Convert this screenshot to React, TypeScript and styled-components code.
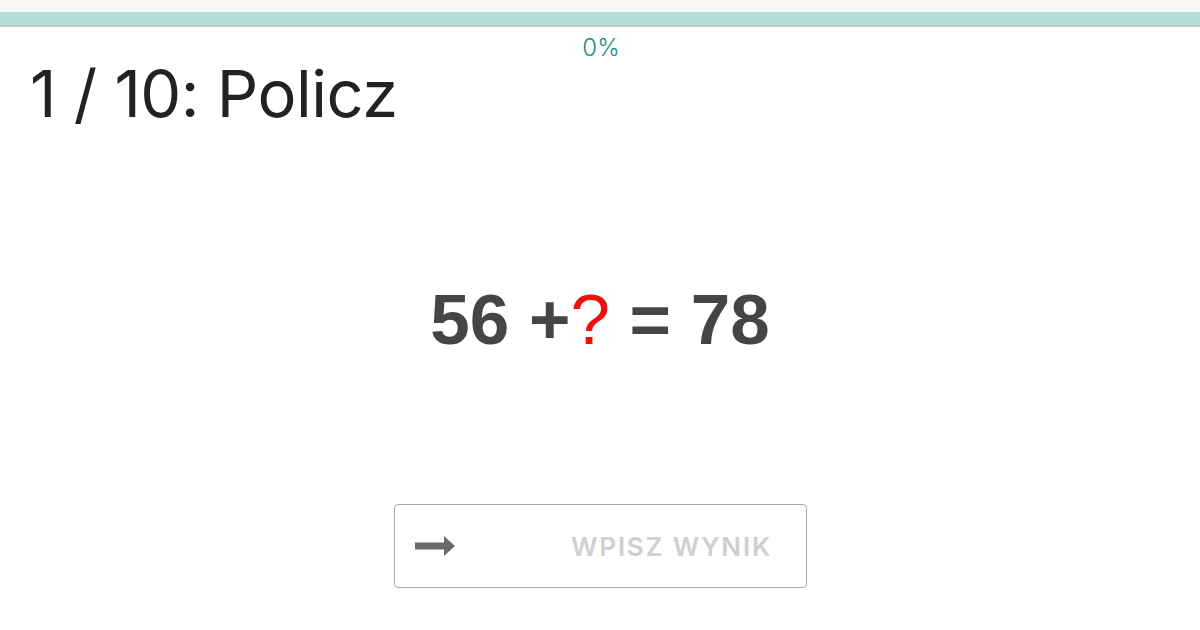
import React from 'react';
import styled, { createGlobalStyle } from 'styled-components';

const GlobalStyle = createGlobalStyle`
  html, body {
    margin: 0;
    padding: 0;
    background: #ffffff;
    font-family: Inter, "Helvetica Neue", Arial, sans-serif;
  }
`;

const Page = styled.div`
  width: 1200px;
  height: 630px;
  display: flex;
  flex-direction: column;
  overflow: hidden;
  background: #fff;
`;

const TopStrip = styled.div`
  height: 12px;
  background: #f7f7f7;
`;

const ProgressTrack = styled.div`
  height: 13px;
  background: #b3dfdb;
  border-bottom: 2px solid #c4c4c4;
`;

const Percent = styled.div`
  align-self: center;
  margin-top: 9px;
  margin-left: 2px;
  font-size: 24px;
  font-weight: 300;
  line-height: 24px;
  color: #15907f;
`;

const Title = styled.h1`
  margin: 0;
  padding-left: 30px;
  font-size: 65px;
  font-weight: 400;
  line-height: 68px;
  color: #222;
  letter-spacing: -0.5px;
`;

const Equation = styled.div`
  margin-top: 155px;
  text-align: center;
  font-family: "Liberation Sans", Arial, sans-serif;
  font-weight: 700;
  font-size: 71px;
  line-height: 74px;
  color: #454545;
`;

const Unknown = styled.span`
  color: #ee1111;
  font-weight: 400;
`;

const AnswerBox = styled.label`
  align-self: center;
  margin-top: 147px;
  margin-left: 1px;
  width: 413px;
  height: 84px;
  box-sizing: border-box;
  border: 1px solid #a9a9a9;
  border-radius: 4px;
  display: flex;
  align-items: center;
  gap: 12px;
  padding: 0 34px 0 19px;
`;

const AnswerInput = styled.input`
  flex: 1;
  min-width: 0;
  border: none;
  outline: none;
  padding: 0;
  background: transparent;
  text-align: right;
  font-family: Inter, "Helvetica Neue", Arial, sans-serif;
  font-size: 26px;
  font-weight: 600;
  letter-spacing: 1.8px;
  color: #444;
  &::placeholder {
    color: #d0d0d0;
  }
`;

const Arrow = () => (
  <svg width="42" height="22" viewBox="0 0 42 22">
    <path d="M1 7.5 H30 V1 L41 11 L30 21 V14.5 H1 Z" fill="#6a6a6a" />
  </svg>
);

export default function App() {
  return (
    <>
      <GlobalStyle />
      <Page>
        <TopStrip />
        <ProgressTrack />
        <Percent>0%</Percent>
        <Title>1 / 10: Policz</Title>
        <Equation>
          56 +<Unknown>?</Unknown> = 78
        </Equation>
        <AnswerBox>
          <Arrow />
          <AnswerInput placeholder="WPISZ WYNIK" />
        </AnswerBox>
      </Page>
    </>
  );
}
